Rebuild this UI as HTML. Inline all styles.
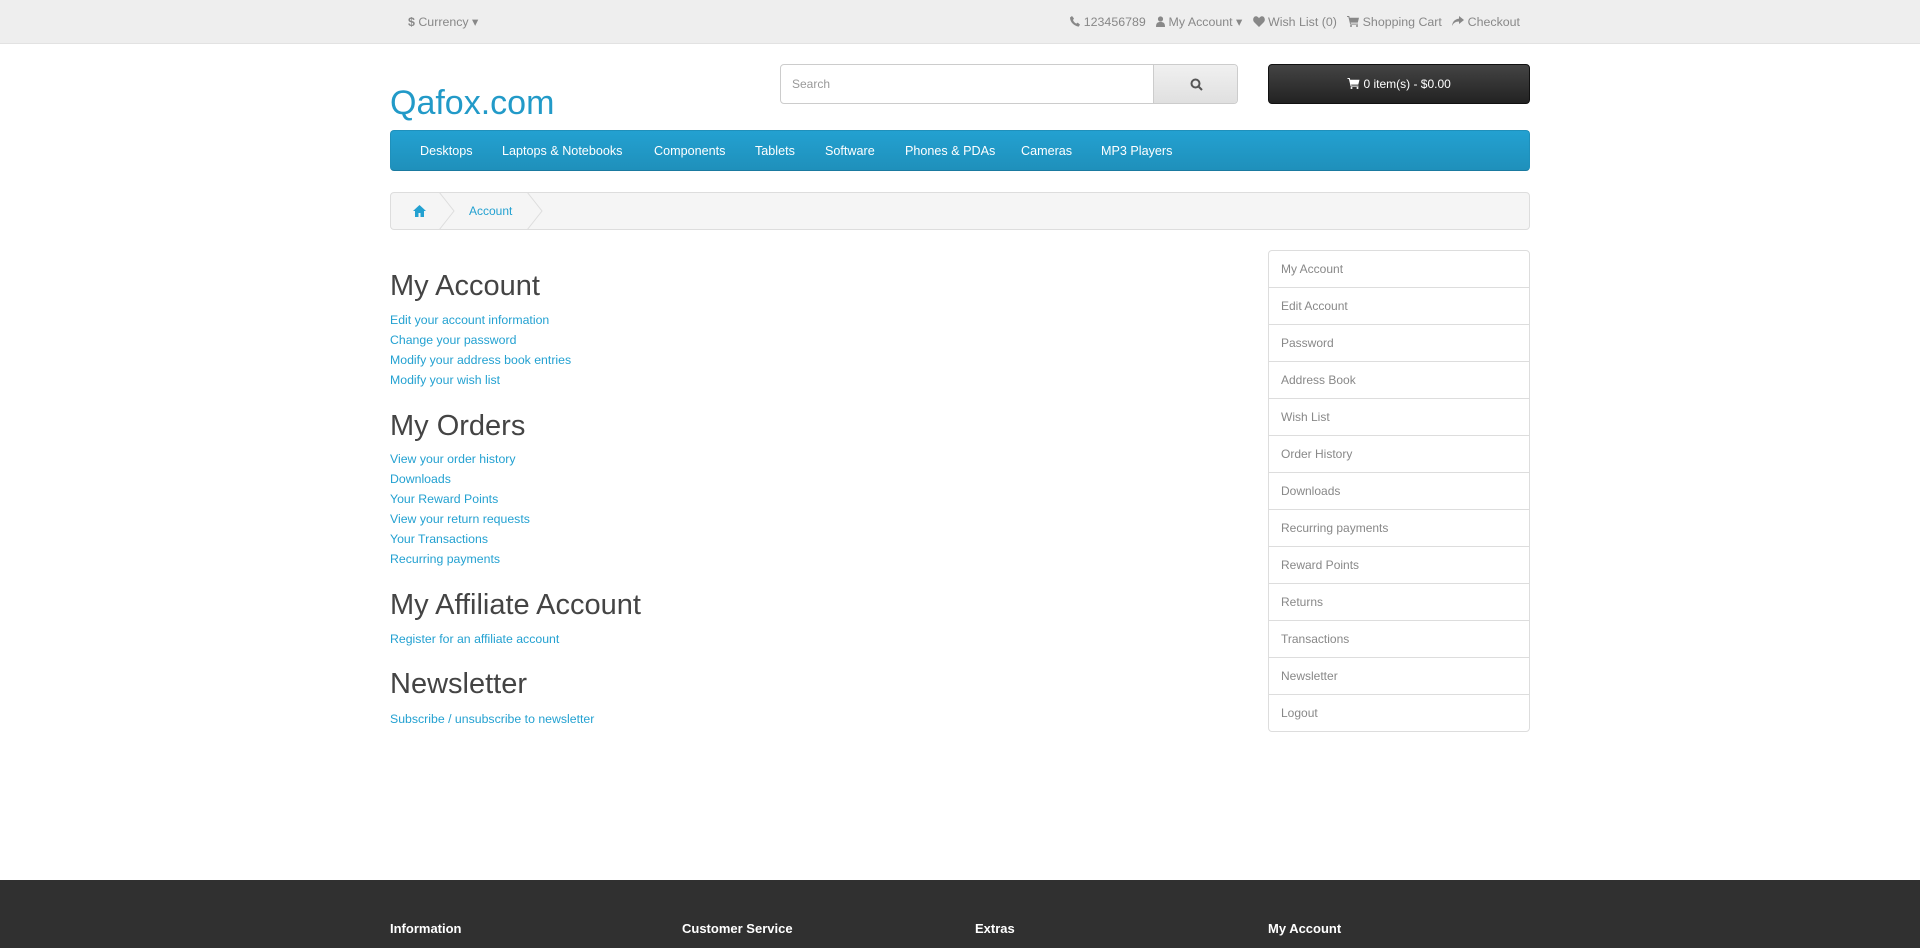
<!DOCTYPE html>
<html><head><meta charset="utf-8"><style>
*{box-sizing:border-box;margin:0;padding:0}
body{width:1920px;height:948px;overflow:hidden;background:#fff;font-family:"Liberation Sans",sans-serif;font-size:12px;color:#666;position:relative}
.abs{position:absolute}
#top{left:0;top:0;width:1920px;height:44px;background:#eee;border-bottom:1px solid #e2e2e2}
.tl{top:14px;color:#888;font-size:12.4px;white-space:nowrap}
.tl svg{vertical-align:-1px;fill:#888}
#logo{left:390px;top:84px;font-size:34px;color:#229ac8}
#search{left:780px;top:64px;width:458px;height:40px;border:1px solid #ccc;border-radius:4px;overflow:hidden;background:#fff}
#search span{position:absolute;left:11px;top:12px;color:#999;font-size:12px}
#sbtn{position:absolute;left:372px;top:0;width:86px;height:38px;background:linear-gradient(#f0f0f0,#e0e0e0);border-left:1px solid #ccc}
#cart{left:1268px;top:64px;width:262px;height:40px;border-radius:4px;background:linear-gradient(#444,#222);border:1px solid #111;color:#fff;text-align:center;line-height:38px;font-size:12px}
#menu{left:390px;top:130px;width:1140px;height:41px;background:linear-gradient(#23a1d1,#1f90bb);border:1px solid #1f90bb;border-bottom-color:#1a7aa0;border-radius:4px}
#menu span{position:absolute;top:13px;color:#fff;font-size:12.6px}
#bc{left:390px;top:192px;width:1140px;height:38px;background:#f5f5f5;border:1px solid #ddd;border-radius:4px}
h2{position:absolute;left:390px;font-size:29px;font-weight:normal;color:#444}
.lk{position:absolute;left:390px;color:#23a1d1;font-size:12.3px}
#side{left:1268px;top:250px;width:262px;height:482px;border:1px solid #ddd;border-radius:4px}
#side div{height:37px;border-bottom:1px solid #ddd;padding:11px 12px;color:#888;font-size:12px}
#side div:last-child{border-bottom:none}
#foot{left:0;top:880px;width:1920px;height:68px;background:#303030}
#foot b{position:absolute;top:41px;color:#fff;font-size:13px}
</style></head><body>
<div id="top" class="abs"></div>
<div class="abs tl" style="left:408px"><b style="color:#888">$</b> Currency ▾</div>
<div class="abs tl" style="right:400px">
<svg width="10" height="11" viewBox="0 0 10 11"><path d="M2 0l2 2.5-1 1.5c.5 1.5 1.8 3 3.3 3.6l1.4-1 2.3 2-1.3 2C4 10 0 6 0 1.5z"/></svg> 123456789 &nbsp;
<svg width="9" height="11" viewBox="0 0 9 11"><circle cx="4.5" cy="3" r="2.6"/><path d="M0 11c0-4 1.5-5 4.5-5S9 7 9 11z"/></svg> My Account ▾ &nbsp;
<svg width="12" height="11" viewBox="0 0 12 11"><path d="M6 11L1 6C-1 3.5 1-.5 3.5.3 4.7.6 5.5 1.5 6 2.3 6.5 1.5 7.3.6 8.5.3 11-.5 13 3.5 11 6z"/></svg> Wish List (0) &nbsp;
<svg width="12" height="11" viewBox="0 0 12 11"><path d="M0 0h2.2l.5 1.8H12l-1.2 4.8H3.6l.3 1H11v1H3.2L1.4 1H0z"/><circle cx="4" cy="10" r="1"/><circle cx="10" cy="10" r="1"/></svg> Shopping Cart &nbsp;
<svg width="12" height="11" viewBox="0 0 12 11"><path d="M7 0l5 4-5 4V5.5C3.5 5.5 1.5 7 0 10 .5 5.5 3 3 7 2.6z"/></svg> Checkout</div>
<div id="logo" class="abs">Qafox.com</div>
<div id="search" class="abs"><span>Search</span><div id="sbtn"><svg style="position:absolute;left:36px;top:13px" width="13" height="13" viewBox="0 0 13 13" fill="none" stroke="#555" stroke-width="2"><circle cx="5.5" cy="5.5" r="4"/><path d="M8.5 8.5l3.5 3.5"/></svg></div></div>
<div id="cart" class="abs"><svg width="13" height="11" viewBox="0 0 12 11" fill="#fff" style="vertical-align:-1px"><path d="M0 0h2.2l.5 1.8H12l-1.2 4.8H3.6l.3 1H11v1H3.2L1.4 1H0z"/><circle cx="4" cy="10" r="1"/><circle cx="10" cy="10" r="1"/></svg> 0 item(s) - $0.00</div>
<div id="menu" class="abs">
<span style="left:29px">Desktops</span><span style="left:111px">Laptops &amp; Notebooks</span><span style="left:263px">Components</span><span style="left:364px">Tablets</span><span style="left:434px">Software</span><span style="left:514px">Phones &amp; PDAs</span><span style="left:630px">Cameras</span><span style="left:710px">MP3 Players</span></div>
<div id="bc" class="abs">
<svg style="position:absolute;left:22px;top:12px" width="13" height="12" viewBox="0 0 13 12" fill="#23a1d1"><path d="M6.5 0L0 6h2v6h3.5V8h2v4H11V6h2z"/></svg>
<svg style="position:absolute;left:48px;top:-1px" width="16" height="38" fill="none" stroke="#ddd"><path d="M0 0l15 19L0 38"/></svg>
<span style="position:absolute;left:78px;top:11px;color:#23a1d1">Account</span>
<svg style="position:absolute;left:136px;top:-1px" width="16" height="38" fill="none" stroke="#ddd"><path d="M0 0l15 19L0 38"/></svg>
</div>
<h2 style="top:270px">My Account</h2>
<div class="lk" style="top:313px">Edit your account information</div>
<div class="lk" style="top:333px">Change your password</div>
<div class="lk" style="top:353px">Modify your address book entries</div>
<div class="lk" style="top:373px">Modify your wish list</div>
<h2 style="top:410px">My Orders</h2>
<div class="lk" style="top:452px">View your order history</div>
<div class="lk" style="top:472px">Downloads</div>
<div class="lk" style="top:492px">Your Reward Points</div>
<div class="lk" style="top:512px">View your return requests</div>
<div class="lk" style="top:532px">Your Transactions</div>
<div class="lk" style="top:552px">Recurring payments</div>
<h2 style="top:589px">My Affiliate Account</h2>
<div class="lk" style="top:632px">Register for an affiliate account</div>
<h2 style="top:668px">Newsletter</h2>
<div class="lk" style="top:712px">Subscribe / unsubscribe to newsletter</div>
<div id="side" class="abs"><div>My Account</div><div>Edit Account</div><div>Password</div><div>Address Book</div><div>Wish List</div><div>Order History</div><div>Downloads</div><div>Recurring payments</div><div>Reward Points</div><div>Returns</div><div>Transactions</div><div>Newsletter</div><div>Logout</div></div>
<div id="foot" class="abs"><b style="left:390px">Information</b><b style="left:682px">Customer Service</b><b style="left:975px">Extras</b><b style="left:1268px">My Account</b></div>
</body></html>
